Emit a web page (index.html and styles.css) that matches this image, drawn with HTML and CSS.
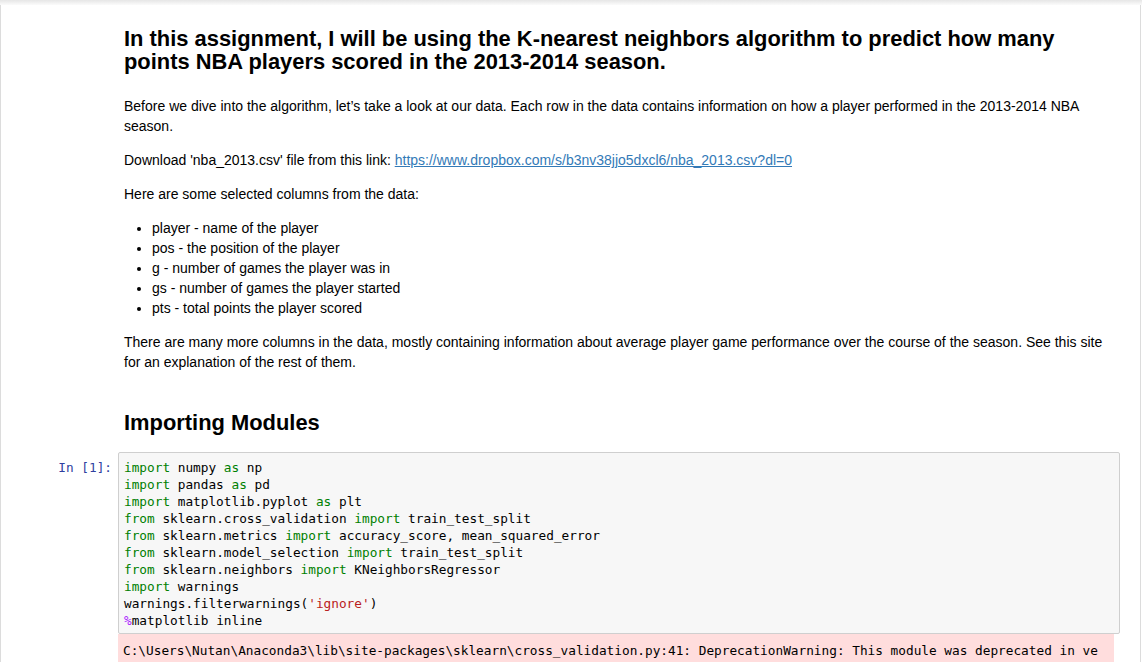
FILE: index.html
```html
<!DOCTYPE html>
<html>
<head>
<meta charset="utf-8">
<title>KNN NBA</title>
<link rel="stylesheet" href="styles.css">
</head>
<body>
<div class="header-shadow"></div>
<div class="notebook">
  <div class="cell">
    <div class="prompt"></div>
    <div class="md">
      <h2 class="title">In this assignment, I will be using the K-nearest neighbors algorithm to predict how many points NBA players scored in the 2013-2014 season.</h2>
      <p class="first">Before we dive into the algorithm, let’s take a look at our data. Each row in the data contains information on how a player performed in the 2013-2014 NBA season.</p>
      <p>Download 'nba_2013.csv' file from this link: <a href="#">https://www.dropbox.com/s/b3nv38jjo5dxcl6/nba_2013.csv?dl=0</a></p>
      <p>Here are some selected columns from the data:</p>
      <ul>
        <li>player - name of the player</li>
        <li>pos - the position of the player</li>
        <li>g - number of games the player was in</li>
        <li>gs - number of games the player started</li>
        <li>pts - total points the player scored</li>
      </ul>
      <p>There are many more columns in the data, mostly containing information about average player game performance over the course of the season. See this site for an explanation of the rest of them.</p>
    </div>
  </div>
  <div class="cell">
    <div class="prompt"></div>
    <div class="md">
      <h2 class="section">Importing Modules</h2>
    </div>
  </div>
  <div class="cell code-cell">
    <div class="prompt in">In&nbsp;[1]:</div>
    <div class="input"><pre><span class="kw">import</span> numpy <span class="kw">as</span> np
<span class="kw">import</span> pandas <span class="kw">as</span> pd
<span class="kw">import</span> matplotlib.pyplot <span class="kw">as</span> plt
<span class="kw">from</span> sklearn.cross_validation <span class="kw">import</span> train_test_split
<span class="kw">from</span> sklearn.metrics <span class="kw">import</span> accuracy_score, mean_squared_error
<span class="kw">from</span> sklearn.model_selection <span class="kw">import</span> train_test_split
<span class="kw">from</span> sklearn.neighbors <span class="kw">import</span> KNeighborsRegressor
<span class="kw">import</span> warnings
warnings.filterwarnings(<span class="str">'ignore'</span>)
<span class="magic">%</span>matplotlib inline</pre></div>
  </div>
  <div class="cell out-cell">
    <div class="prompt"></div>
    <div class="stderr"><pre>C:\Users\Nutan\Anaconda3\lib\site-packages\sklearn\cross_validation.py:41: DeprecationWarning: This module was deprecated in version 0.18 in favor of the model_selection module into which all the refactored classes and functions are moved.</pre></div>
  </div>
</div>
</body>
</html>
```
FILE: styles.css
```css
html, body {
  margin: 0;
  padding: 0;
  background: #fff;
}
body {
  font-family: "Liberation Sans", Arial, sans-serif;
  font-size: 14px;
  line-height: 20px;
  color: #000;
  overflow: hidden;
  height: 662px;
}
.header-shadow {
  height: 5px;
  background: linear-gradient(#e6e6e6, #fbfbfb);
}
.notebook {
  box-sizing: border-box;
  width: 1141px;
  border-left: 1px solid #dcdcdc;
  border-right: 1px solid #dcdcdc;
  padding: 0 15px;
  min-height: 700px;
}
.cell {
  display: flex;
  padding: 0 5px;
}
.prompt {
  width: 97px;
  flex: none;
}
.md {
  flex: 1;
  padding: 0 6px 0 6px;
}
.title {
  font-size: 21.9px;
  line-height: 23px;
  font-weight: bold;
  margin: 22px 0 0 0;
}
.md p {
  margin: 14px 0 0 0;
}
.md p.first {
  margin-top: 23px;
}
.md ul {
  margin: 14px 0 0 0;
  padding-left: 28px;
}
.md a {
  color: #337ab7;
  text-decoration: underline;
}
.section {
  font-size: 21.9px;
  line-height: 23px;
  font-weight: bold;
  margin: 39px 0 0 0;
}
.code-cell {
  margin-top: 18px;
}
.prompt.in {
  font-family: "DejaVu Sans Mono", "Liberation Mono", monospace;
  font-size: 12.75px;
  line-height: 17px;
  color: #303f9f;
  text-align: right;
  box-sizing: border-box;
  padding: 7px 6px 0 0;
}
.input {
  flex: 1;
  border: 1px solid #cfcfcf;
  border-radius: 2px;
  background: #f7f7f7;
  padding: 6px 6px 4px 5px;
}
pre {
  margin: 0;
  font-family: "DejaVu Sans Mono", "Liberation Mono", monospace;
  font-size: 12.75px;
  line-height: 17px;
  color: #000;
}
.kw { color: #008000; }
.str { color: #ba2121; }
.magic { color: #aa22ff; }
.stderr {
  flex: 1;
  background: #fdd;
  margin-right: 6px;
  padding: 8px 16px 6px 5px;
  min-width: 0;
}
.stderr pre {
  overflow: hidden;
  white-space: pre;
}
```
